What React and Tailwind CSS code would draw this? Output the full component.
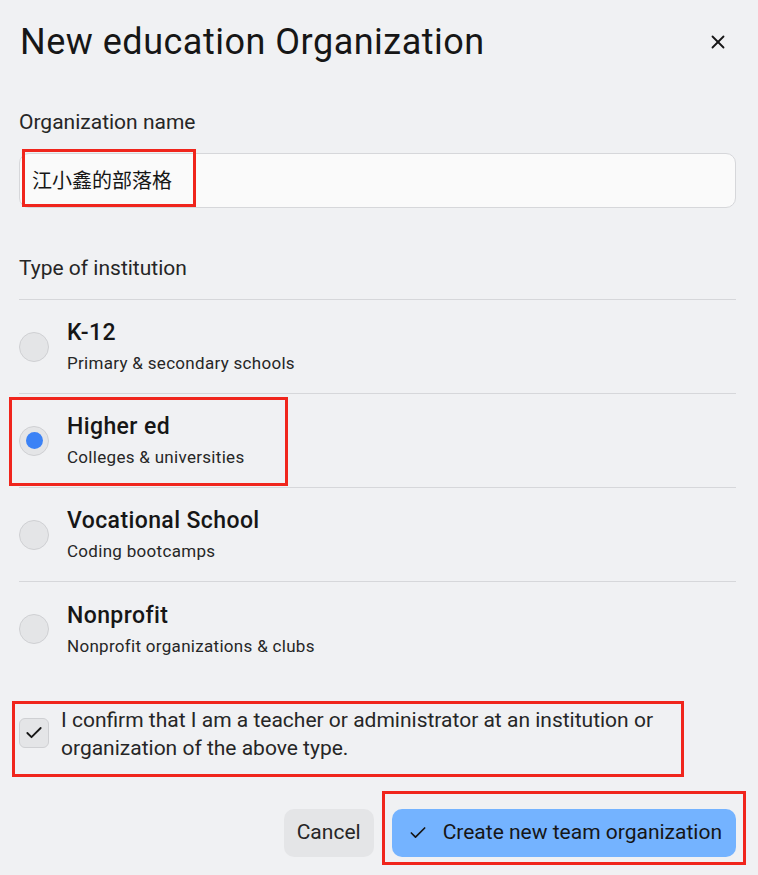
import { X, Check } from "lucide-react";

const options = [
  { title: "K-12", sub: "Primary & secondary schools" },
  { title: "Higher ed", sub: "Colleges & universities", checked: true },
  { title: "Vocational School", sub: "Coding bootcamps" },
  { title: "Nonprofit", sub: "Nonprofit organizations & clubs" },
];

export default function App() {
  return (
    <div className="relative w-[758px] h-[875px] bg-[#f0f1f3] text-[#161616] font-['Roboto','Noto_Sans_CJK_SC',sans-serif] overflow-hidden">
      <div className="pl-[19px] pr-[22px]">
        {/* Header */}
        <div className="flex items-center justify-between h-[84px]">
          <h1 className="text-[36px] font-normal tracking-[0.5px] pl-px">New education Organization</h1>
          <button className="mr-[7px] text-[#161616]">
            <X size={22} strokeWidth={2} />
          </button>
        </div>

        {/* Name */}
        <label className="block mt-[24px] text-[21px] text-[#262626] leading-[28px]">Organization name</label>
        <div className="mt-[17px] h-[55px] rounded-[10px] border border-[#d6d7da] bg-[#fafafa] flex items-center px-[12px] text-[20px]">
          江小鑫的部落格
        </div>

        {/* Type */}
        <div className="mt-[46px] text-[21px] text-[#262626] leading-[28px]">Type of institution</div>
        <div className="mt-[17px] border-t border-[#d6d7da]">
          {options.map((o, i) => (
            <div
              key={o.title}
              className={"flex items-center gap-[18px] h-[94px] " + (i < 3 ? "border-b border-[#d6d7da]" : "")}
            >
              <div className="w-[30px] h-[30px] rounded-full border border-[#cfd0d3] bg-[#e4e5e7] flex items-center justify-center">
                {o.checked && <div className="w-[17px] h-[17px] rounded-full bg-[#3b82f6]" />}
              </div>
              <div className="flex flex-col">
                <span className="text-[23px] font-medium tracking-[0.4px] leading-[30px]">{o.title}</span>
                <span className="text-[17px] tracking-[0.3px] text-[#262626] leading-[24px] mt-[3px]">{o.sub}</span>
              </div>
            </div>
          ))}
        </div>

        {/* Confirm */}
        <div className="mt-[30px] flex items-start gap-[12px]">
          <div className="mt-[12px] w-[30px] h-[30px] shrink-0 rounded-[6px] border border-[#cfd0d3] bg-[#e4e5e7] flex items-center justify-center">
            <Check size={20} strokeWidth={2.2} />
          </div>
          <p className="text-[21px] leading-[28px] text-[#262626]">
            I confirm that I am a teacher or administrator at an institution or organization of the above type.
          </p>
        </div>

        {/* Buttons */}
        <div className="mt-[47px] flex justify-end gap-[18px]">
          <button className="h-[48px] px-[13px] rounded-[10px] bg-[#e4e5e7] text-[21px] text-[#262626]">Cancel</button>
          <button className="h-[48px] pl-[16px] pr-[14px] rounded-[10px] bg-[#74b3ff] text-[21px] text-[#161616] flex items-center gap-[15px]">
            <Check size={20} strokeWidth={2} />
            Create new team organization
          </button>
        </div>
      </div>

      {/* Annotation boxes */}
      <div className="absolute left-[22px] top-[149px] w-[174px] h-[58px] border-[3px] border-[#f0251c]" />
      <div className="absolute left-[9px] top-[397px] w-[279px] h-[89px] border-[3px] border-[#f0251c]" />
      <div className="absolute left-[12px] top-[701px] w-[672px] h-[76px] border-[3px] border-[#f0251c]" />
      <div className="absolute left-[382px] top-[791px] w-[364px] h-[74px] border-[3px] border-[#f0251c]" />
    </div>
  );
}
